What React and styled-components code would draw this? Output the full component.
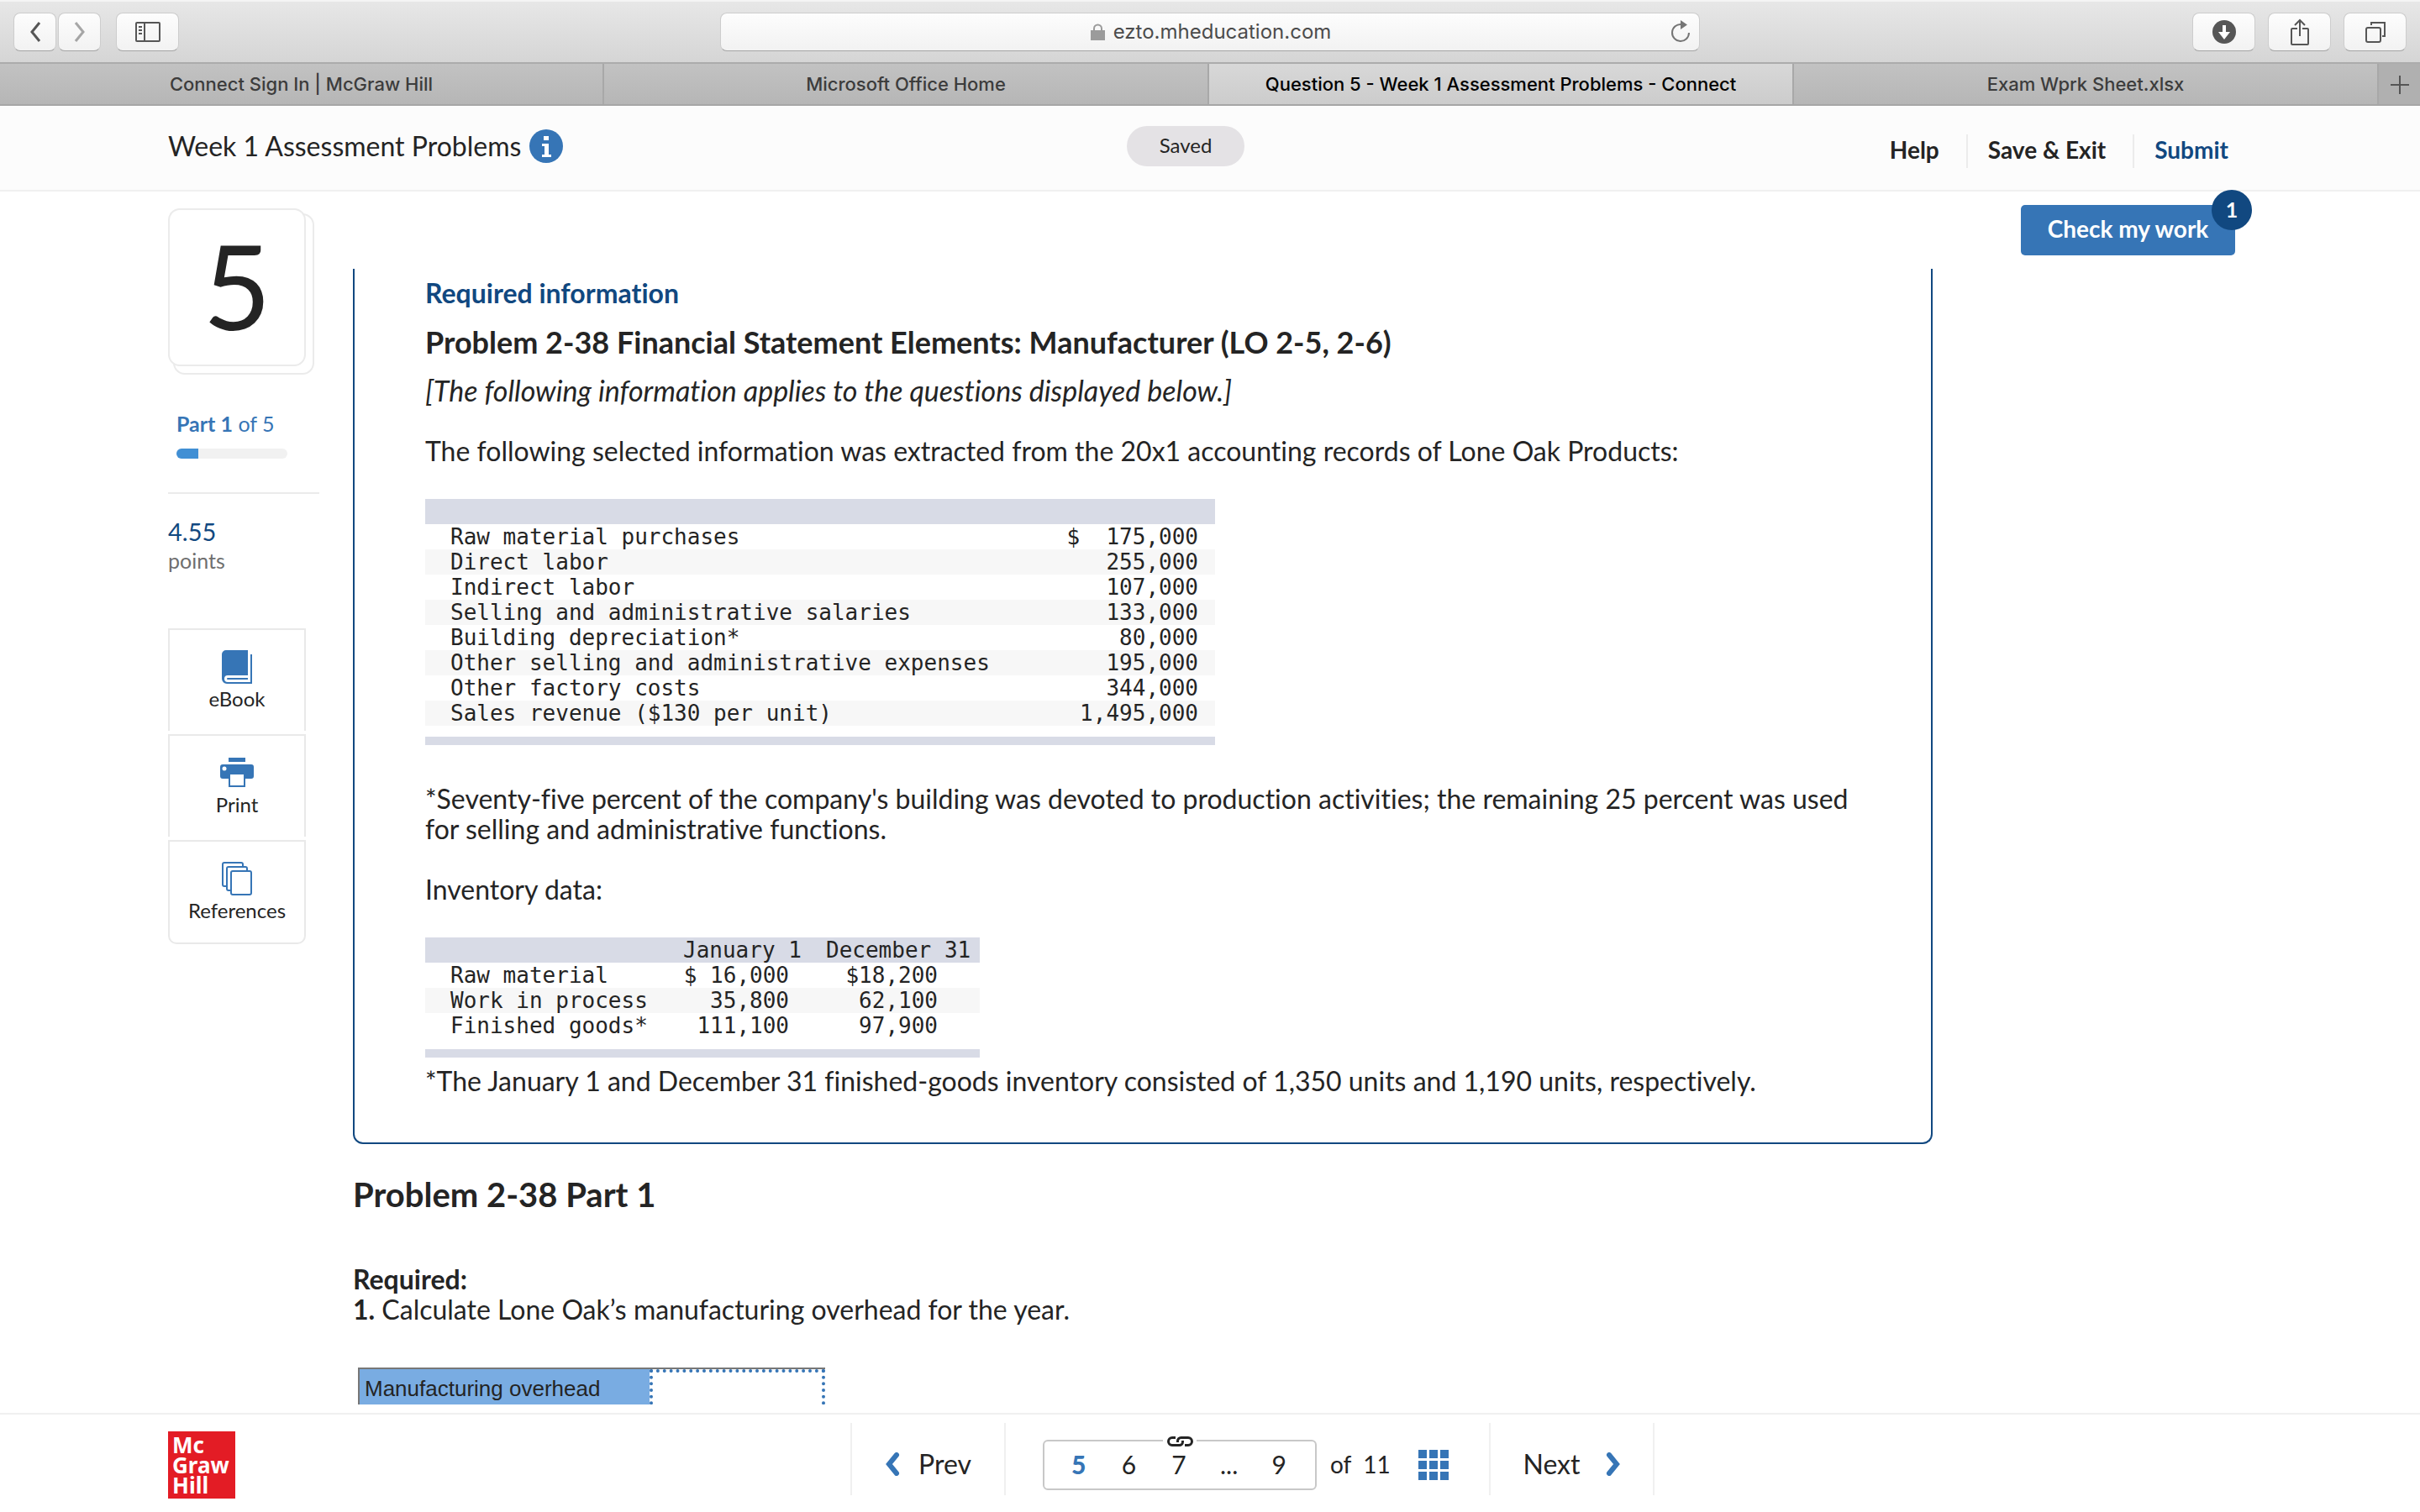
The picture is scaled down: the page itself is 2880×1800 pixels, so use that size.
import React from 'react';
import styled, { createGlobalStyle } from 'styled-components';

const Global = createGlobalStyle`
  *, *::before, *::after { box-sizing: border-box; }
  body { margin: 0; background: #fff; color: #242424; font: 32px/36px Lato, "Open Sans", sans-serif; font-variant-ligatures: none; }
  button, input { font: inherit; color: inherit; margin: 0; }
  button { padding: 0; border: 0; background: none; }
  h1, h2, h3, p { margin: 0; }
  a { color: inherit; text-decoration: none; }
`;

const Page = styled.div`
  height: 100vh;
  display: flex;
  flex-direction: column;
  overflow: hidden;
`;

/* Browser chrome */
const Toolbar = styled.div`
  flex: none;
  height: 76px;
  padding: 0 16px;
  display: grid;
  grid-template-columns: 1fr 1166px 1fr;
  align-items: center;
  background: linear-gradient(#e7e7e7, #d5d5d5);
  border-top: 2px solid #f4f4f4;
  border-bottom: 2px solid #acacac;
`;
const ToolGroup = styled.div`
  display: flex;
  gap: ${p => p.$gap}px;
  justify-content: ${p => p.$end ? 'flex-end' : 'flex-start'};
`;
const ChromeButton = styled.button`
  width: ${p => p.$w}px;
  height: 46px;
  display: flex;
  align-items: center;
  justify-content: center;
  border-radius: 8px;
  border: 1px solid #cdcdcd;
  border-bottom-color: #a4a4a4;
  background: linear-gradient(#fdfdfd, #f2f2f2);
  color: #565656;
`;
const Address = styled.div`
  height: 46px;
  padding: 0 10px 0 36px;
  display: flex;
  align-items: center;
  border-radius: 8px;
  border: 1px solid #cdcdcd;
  border-bottom-color: #a4a4a4;
  background: linear-gradient(#fdfdfd, #f2f2f2);
  color: #4c4c4c;
  font: 24px/30px Inter, sans-serif;
`;
const AddressText = styled.span`
  flex: 1;
  display: flex;
  justify-content: center;
  align-items: center;
  gap: 10px;
`;
const TabBar = styled.div`
  flex: none;
  height: 50px;
  display: grid;
  grid-template-columns: 719fr 720fr 696fr 696fr 49px;
  border-bottom: 2px solid #a6a6a6;
  background: linear-gradient(#c2c2c2, #b6b6b6);
  font: 500 22px/28px Inter, sans-serif;
`;
const Tab = styled.button`
  display: flex;
  align-items: center;
  justify-content: center;
  border-right: 2px solid #a8a8a8;
  background: ${p => p.$active ? 'linear-gradient(#d8d8d8, #cccccc)' : 'none'};
  color: ${p => p.$active ? '#000' : '#3c3c3c'};
`;
const NewTab = styled.button`
  padding-top: 2px;
  display: flex;
  align-items: center;
  justify-content: center;
  background: #b0b0b0;
  color: #555;
`;

/* Assignment header */
const Header = styled.header`
  flex: none;
  height: 102px;
  padding: 0 228px 0 200px;
  display: grid;
  grid-template-columns: 1fr 140px 1171px;
  background: #fcfcfc;
  border-bottom: 2px solid #f0f0f0;
`;
const Title = styled.h1`
  display: flex;
  align-items: center;
  gap: 10px;
  height: 96px;
  font-size: 32px;
  font-weight: 400;
`;
const Saved = styled.span`
  height: 48px;
  margin-top: 24px;
  border-radius: 24px;
  background: #e4e2e5;
  text-align: center;
  font-size: 24px;
  line-height: 45px;
`;
const Nav = styled.nav`
  display: flex;
  justify-content: flex-end;
  align-items: center;
  height: 108px;
  font-size: 28px;
  font-weight: 700;
`;
const NavLink = styled.a`
  height: 40px;
  line-height: 36px;
  padding-left: 24px;
  padding-right: ${p => p.$last ? 0 : 32}px;
  border-right: ${p => p.$last ? 0 : 2}px solid #ececec;
  color: ${p => p.$last ? '#114880' : '#242424'};
`;

/* Work area */
const Body = styled.div`
  flex: 1;
  min-height: 0;
  margin-bottom: 10px;
  padding: 0 220px 0 200px;
  display: grid;
  grid-template-columns: 220px minmax(0, 1fr) 360px;
  align-items: start;
`;
const Side = styled.aside`
  padding-top: 20px;
`;
const NumberCard = styled.div`
  position: relative;
  width: 164px;
  height: 188px;
  border: 2px solid #ebebeb;
  border-radius: 14px;
  background: #fff;
  text-align: center;
  font-size: 140px;
  line-height: 178px;
  &::after {
    content: '';
    position: absolute;
    z-index: -1;
    inset: 4px -12px -12px 4px;
    border: 2px solid #ebebeb;
    border-radius: 14px;
    background: #fff;
  }
`;
const Part = styled.div`
  width: 132px;
  margin: 50px 0 0 10px;
  color: #3675b6;
  font-size: 25px;
  white-space: nowrap;
`;
const Bar = styled.div`
  height: 12px;
  margin-top: 12px;
  border-radius: 6px;
  overflow: hidden;
  background: #f1f1f1;
`;
const BarFill = styled.div`
  height: 100%;
  background: #418fd4;
`;
const Points = styled.div`
  width: 180px;
  margin: 40px 0 65px;
  padding-top: 27px;
  border-top: 2px solid #ebebeb;
  color: #6f6f6f;
  font-size: 25px;
  line-height: 32px;
`;
const PointValue = styled.div`
  color: #114880;
  font-size: 29px;
  line-height: 36px;
`;
const Tools = styled.div`
  width: 164px;
  display: grid;
  gap: 4px;
`;
const Tool = styled.button`
  height: ${p => p.$last ? 124 : 122}px;
  padding-top: 23px;
  display: flex;
  flex-direction: column;
  align-items: center;
  border: 2px solid #e9e9e9;
  border-bottom-width: ${p => p.$last ? 2 : 0}px;
  border-radius: ${p => p.$last ? '0 0 10px 10px' : 0};
  font-size: 24px;
  line-height: 30px;
  svg { margin-bottom: 2px; }
`;

const Main = styled.main`
  height: 100%;
  min-height: 0;
  padding-top: 92px;
  overflow: hidden;
`;
const Panel = styled.section`
  padding: 11px 84px 55px;
  border: 2px solid #114880;
  border-top: 0;
  border-radius: 0 0 12px 12px;
`;
const Eyebrow = styled.h2`
  color: #114880;
  font-size: 32px;
  line-height: 36px;
`;
const ProblemTitle = styled.h3`
  margin-top: 20px;
  font-size: 36px;
  line-height: 40px;
`;
const Intro = styled.p`
  margin: 20px 0 36px;
  font-size: 34px;
  font-style: italic;
`;
const Para = styled.p`
  margin-top: ${p => p.$top || 0}px;
`;
const Ledger = styled.table`
  width: ${p => p.$w}px;
  margin-top: 39px;
  border-collapse: separate;
  border-spacing: 0;
  font: 26px/30px "DejaVu Sans Mono", monospace;
  white-space: pre;
  th { font-weight: 400; padding: 0; }
  td { padding: 0; }
  thead tr { height: 30px; background: #d8dbe6; }
  tbody tr:nth-child(even) { background: #f7f7f7; }
  tbody th { text-align: left; padding-left: 30px; }
  tfoot td { height: 23px; border-bottom: 10px solid #d8dbe6; }
`;
const Amount = styled.td`
  text-align: right;
  && { padding-right: ${p => p.$pad}px; }
`;
const MonthHead = styled.th`
  text-align: left;
  width: ${p => p.$w}px;
`;
const PartTitle = styled.h2`
  margin: 37px 0 60px;
  font-size: 40px;
  line-height: 46px;
`;
const AnswerTable = styled.table`
  width: 556px;
  margin: 51px 0 0 6px;
  border-collapse: separate;
  border-spacing: 0;
  border-top: 2px solid #777;
  border-left: 2px solid #777;
  font: 26px/32px "Liberation Sans", Arial, sans-serif;
  td, th { height: 50px; padding: 0; }
`;
const AnswerLabel = styled.th`
  width: 345px;
  background: #79ace2;
  text-align: left;
  font-weight: 400;
  label { display: block; padding: 0 0 4px 6px; }
`;
const AnswerInput = styled.input`
  display: block;
  width: 100%;
  height: 50px;
  padding: 0 8px;
  border: 4px dotted #3675b6;
  background: #fff;
  outline: 0;
`;
const CheckWrap = styled.div`
  justify-self: end;
  position: relative;
  margin-top: 16px;
`;
const CheckButton = styled.button`
  width: 255px;
  height: 60px;
  padding-bottom: 4px;
  border-radius: 5px;
  background: #3675b6;
  color: #fff;
  font-size: 28px;
  font-weight: 700;
`;
const Badge = styled.span`
  position: absolute;
  top: -18px;
  right: -20px;
  width: 48px;
  height: 48px;
  border-radius: 50%;
  background: #114880;
  color: #fff;
  text-align: center;
  font-size: 25px;
  font-weight: 700;
  line-height: 46px;
`;

/* Footer */
const Footer = styled.footer`
  flex: none;
  height: 118px;
  padding: 0 200px;
  border-top: 2px solid #f0f0f0;
  display: grid;
  grid-template-columns: 812px auto 1fr;
  align-items: start;
`;
const Logo = styled.a`
  width: 80px;
  height: 80px;
  margin-top: 20px;
  padding: 4px 5px;
  display: flex;
  flex-direction: column;
  background: #e31c25;
  color: #fff;
  font: 700 26px/24px "Noto Sans", sans-serif;
`;
const Pager = styled.nav`
  margin-top: 10px;
  height: 86px;
  display: flex;
  border-left: 2px solid #f0f0f0;
  font-size: 32px;
`;
const Step = styled.button`
  width: ${p => p.$w}px;
  padding-top: 12px;
  display: flex;
  align-items: center;
  justify-content: center;
  gap: ${p => p.$gap}px;
  border-right: 2px solid #f0f0f0;
`;
const Middle = styled.div`
  width: 577px;
  padding: 20px 0 0 44px;
  display: flex;
  align-items: flex-start;
  border-right: 2px solid #f0f0f0;
`;
const Pages = styled.div`
  position: relative;
  width: 326px;
  height: 60px;
  padding: 0 13px 3px 11px;
  display: grid;
  grid-template-columns: repeat(5, 1fr);
  border: 2px solid #c8c8c8;
  border-radius: 6px;
`;
const PageNumber = styled.button`
  font-size: 30px;
  font-weight: ${p => p.$current ? 900 : 400};
  color: ${p => p.$current ? '#3675b6' : '#242424'};
`;
const LinkMark = styled.span`
  position: absolute;
  top: -8px;
  left: 141px;
  width: 40px;
  height: 16px;
  display: flex;
  justify-content: center;
  align-items: center;
  background: #fff;
`;
const Total = styled.span`
  width: 121px;
  padding-left: 16px;
  font-size: 28px;
  line-height: 58px;
`;
const GridButton = styled.button`
  margin-top: 12px;
  height: 36px;
  line-height: 0;
`;

const Svg = ({ w, h, children, ...rest }) => (
  <svg width={w} height={h} viewBox={`0 0 ${w} ${h}`} fill="none" stroke="currentColor" strokeWidth="3" aria-hidden="true" {...rest}>{children}</svg>
);

const costs = [
  ['Raw material purchases', '$  175,000'],
  ['Direct labor', '255,000'],
  ['Indirect labor', '107,000'],
  ['Selling and administrative salaries', '133,000'],
  ['Building depreciation*', '80,000'],
  ['Other selling and administrative expenses', '195,000'],
  ['Other factory costs', '344,000'],
  ['Sales revenue ($130 per unit)', '1,495,000'],
];
const inventory = [
  ['Raw material', '$ 16,000', '$18,200'],
  ['Work in process', '35,800', '62,100'],
  ['Finished goods*', '111,100', '97,900'],
];
const progress = { part: 1, of: 5 };

export default function App() {
  return (
    <Page>
      <Global />
      <Toolbar>
        <ToolGroup $gap={18}>
          <ToolGroup $gap={2}>
            <ChromeButton $w={51} aria-label="Back"><Svg w={14} h={24}><path d="M12 1 L3 12 L12 23" /></Svg></ChromeButton>
            <ChromeButton $w={51} aria-label="Forward"><Svg w={14} h={24} opacity="0.5"><path d="M2 1 L11 12 L2 23" /></Svg></ChromeButton>
          </ToolGroup>
          <ChromeButton $w={75} aria-label="Sidebar">
            <Svg w={30} h={24} strokeWidth="2"><rect x="1" y="1" width="28" height="22" rx="1" /><path d="M11 1v22M4 6h4M4 10h4M4 14h4" /></Svg>
          </ChromeButton>
        </ToolGroup>
        <Address>
          <AddressText>
            <Svg w={17} h={20} stroke="#9b9b9b" strokeWidth="2"><path d="M4 9V6a4.5 4.5 0 0 1 9 0v3" /><rect x="1" y="9" width="15" height="10" fill="#9b9b9b" /></Svg>
            ezto.mheducation.com
          </AddressText>
          <button aria-label="Reload">
            <Svg w={24} h={28} stroke="#757575" strokeWidth="2" display="block"><path d="M13 5a10 10 0 1 0 9 10" /><path d="M12 0l8 5.5l-8 5.5z" fill="#757575" stroke="none" /></Svg>
          </button>
        </Address>
        <ToolGroup $gap={15} $end>
          <ChromeButton $w={75} aria-label="Downloads">
            <Svg w={28} h={28}><circle cx="14" cy="14" r="14" fill="#565656" stroke="none" /><path d="M14 6v10" stroke="#fff" strokeWidth="4" /><path d="M7 14h14l-7 9z" fill="#fff" stroke="none" /></Svg>
          </ChromeButton>
          <ChromeButton $w={75} aria-label="Share">
            <Svg w={24} h={32} strokeWidth="2"><path d="M9 12H3a1 1 0 0 0-1 1v17a1 1 0 0 0 1 1h18a1 1 0 0 0 1-1V13a1 1 0 0 0-1-1h-6M12 21V2M6 8l6-6l6 6" /></Svg>
          </ChromeButton>
          <ChromeButton $w={75} aria-label="Tabs">
            <Svg w={24} h={26} strokeWidth="2"><rect x="1" y="8" width="17" height="17" rx="2" /><path d="M7 5V2h16v16h-3" /></Svg>
          </ChromeButton>
        </ToolGroup>
      </Toolbar>
      <TabBar>
        <Tab>Connect Sign In | McGraw Hill</Tab>
        <Tab>Microsoft Office Home</Tab>
        <Tab $active>Question 5 - Week 1 Assessment Problems - Connect</Tab>
        <Tab>Exam Wprk Sheet.xlsx</Tab>
        <NewTab aria-label="New tab"><Svg w={22} h={22} strokeWidth="2"><path d="M11 0v22M0 11h22" /></Svg></NewTab>
      </TabBar>

      <Header>
        <Title>
          Week 1 Assessment Problems
          <Svg w={40} h={40}><circle cx="20" cy="20" r="20" fill="#3675b6" stroke="none" /><path d="M17 8h6v5h-6zM15 17h8v13h3v3H15v-3h3V20h-3z" fill="#fff" stroke="none" /></Svg>
        </Title>
        <Saved>Saved</Saved>
        <Nav>
          <NavLink href="#help">Help</NavLink>
          <NavLink href="#exit">Save &amp; Exit</NavLink>
          <NavLink href="#submit" $last>Submit</NavLink>
        </Nav>
      </Header>

      <Body>
        <Side>
          <NumberCard>5</NumberCard>
          <Part>
            <b>Part {progress.part}</b> of {progress.of}
            <Bar><BarFill style={{ width: `${progress.part / progress.of * 100}%` }} /></Bar>
          </Part>
          <Points><PointValue>4.55</PointValue>points</Points>
          <Tools>
            <Tool>
              <Svg w={36} h={42} stroke="none"><path d="M5 1H31V31H7a4 4 0 0 0 0 8H34V6h2V41H6a6 6 0 0 1-6-6V6a5 5 0 0 1 5-5zM7 34H31v2H7a1 1 0 0 1 0-2z" fill="#3675b6" /></Svg>
              eBook
            </Tool>
            <Tool>
              <Svg w={40} h={42} stroke="none"><path d="M10 3h20v5H10zM3 11h34a3 3 0 0 1 3 3V25a3 3 0 0 1-3 3H30v10H10V28H3a3 3 0 0 1-3-3V14a3 3 0 0 1 3-3z" fill="#3675b6" /><circle cx="5" cy="16" r="2.5" fill="#fff" /><path d="M12 23h16v13H12z" fill="#fff" /></Svg>
              Print
            </Tool>
            <Tool $last>
              <Svg w={36} h={42} stroke="#3675b6" strokeWidth="2"><path d="M6 30H3a2 2 0 0 1-2-2V4a2 2 0 0 1 2-2H23a2 2 0 0 1 2 2V7" /><path d="M11 35H8a2 2 0 0 1-2-2V9a2 2 0 0 1 2-2H28a2 2 0 0 1 2 2V12" /><rect x="11" y="12" width="24" height="28" rx="2" /></Svg>
              References
            </Tool>
          </Tools>
        </Side>

        <Main>
          <Panel>
            <Eyebrow>Required information</Eyebrow>
            <ProblemTitle>Problem 2-38 Financial Statement Elements: Manufacturer (LO 2-5, 2-6)</ProblemTitle>
            <Intro>[The following information applies to the questions displayed below.]</Intro>
            <Para>The following selected information was extracted from the 20x1 accounting records of Lone Oak Products:</Para>
            <Ledger $w={940}>
              <thead><tr><th colSpan={2} /></tr></thead>
              <tbody>
                {costs.map(([name, amount]) => (
                  <tr key={name}><th scope="row">{name}</th><Amount $pad={20}>{amount}</Amount></tr>
                ))}
              </tbody>
              <tfoot><tr><td colSpan={2} /></tr></tfoot>
            </Ledger>
            <Para $top={46}>*Seventy-five percent of the company's building was devoted to production activities; the remaining 25 percent was used for selling and administrative functions.</Para>
            <Para $top={36}>Inventory data:</Para>
            <Ledger $w={660}>
              <thead><tr><th /><MonthHead $w={170}>January 1</MonthHead><MonthHead $w={183}>December 31</MonthHead></tr></thead>
              <tbody>
                {inventory.map(([name, jan, dec]) => (
                  <tr key={name}><th scope="row">{name}</th><Amount $pad={44}>{jan}</Amount><Amount $pad={50}>{dec}</Amount></tr>
                ))}
              </tbody>
              <tfoot><tr><td colSpan={3} /></tr></tfoot>
            </Ledger>
            <Para $top={10}>*The January 1 and December 31 finished-goods inventory consisted of 1,350 units and 1,190 units, respectively.</Para>
          </Panel>
          <PartTitle>Problem 2-38 Part 1</PartTitle>
          <Para><b>Required:</b></Para>
          <Para><b>1.</b> Calculate Lone Oak’s manufacturing overhead for the year.</Para>
          <AnswerTable>
            <tbody>
              <tr>
                <AnswerLabel scope="row"><label htmlFor="overhead">Manufacturing overhead</label></AnswerLabel>
                <td><AnswerInput id="overhead" /></td>
              </tr>
            </tbody>
          </AnswerTable>
        </Main>

        <CheckWrap>
          <CheckButton>Check my work</CheckButton>
          <Badge>1</Badge>
        </CheckWrap>
      </Body>

      <Footer>
        <Logo href="#home"><span>Mc</span><span>Graw</span><span>Hill</span></Logo>
        <Pager>
          <Step $w={183} $gap={22}><Svg w={18} h={28} stroke="#3675b6" strokeWidth="6"><path d="M14 3L5 14L14 25" strokeLinecap="round" /></Svg>Prev</Step>
          <Middle>
            <Pages>
              <PageNumber $current>5</PageNumber>
              <PageNumber>6</PageNumber>
              <PageNumber>7</PageNumber>
              <PageNumber>...</PageNumber>
              <PageNumber>9</PageNumber>
              <LinkMark><Svg w={33} h={14}><path d="M11 2.5H7a4.5 4.5 0 0 0 0 9h8.5a4 4 0 0 0 4-4V6M22 11.5H26a4.5 4.5 0 0 0 0-9h-8.5a4 4 0 0 0-4 4v1.5" /></Svg></LinkMark>
            </Pages>
            <Total>of&nbsp; 11</Total>
            <GridButton aria-label="All questions">
              <Svg w={36} h={36} stroke="none" fill="#3675b6">
                {[0, 13, 26].map(y => [0, 13, 26].map(x => <rect key={`${x}-${y}`} x={x} y={y} width="10" height="10" />))}
              </Svg>
            </GridButton>
          </Middle>
          <Step $w={195} $gap={30}>Next<Svg w={18} h={28} stroke="#3675b6" strokeWidth="6"><path d="M4 3L13 14L4 25" strokeLinecap="round" /></Svg></Step>
        </Pager>
      </Footer>
    </Page>
  );
}
